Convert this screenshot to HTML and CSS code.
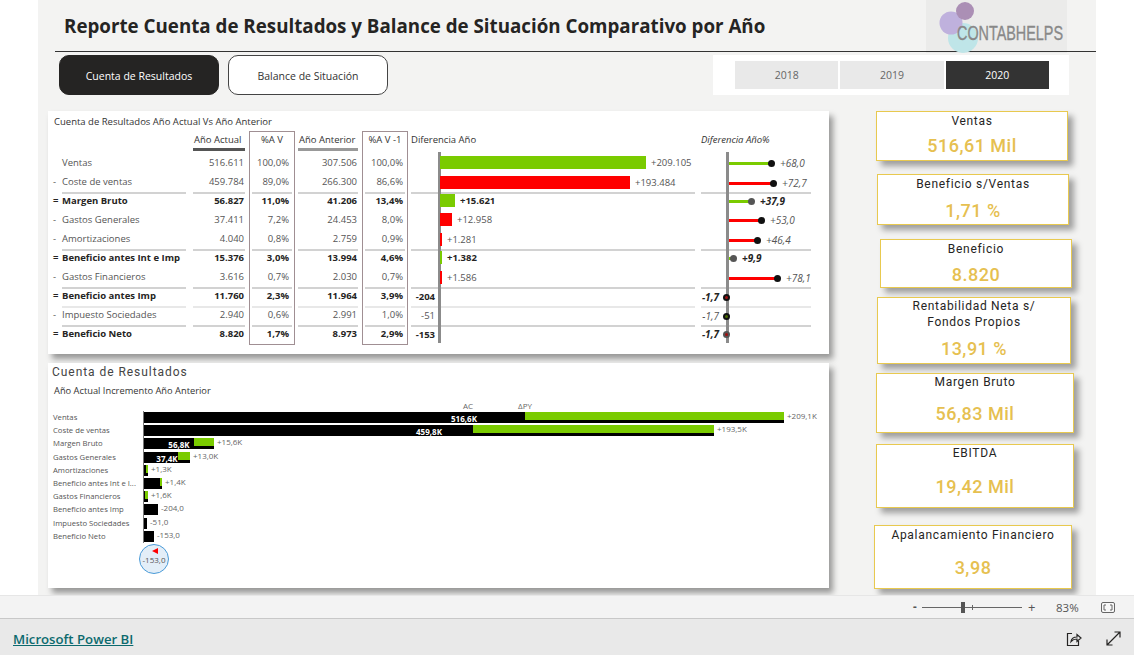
FILE: index.html
```html
<!DOCTYPE html>
<html>
<head>
<meta charset="utf-8"/>
<title>Reporte Cuenta de Resultados</title>
<link rel="stylesheet" href="styles.css">
</head>
<body>

<div class="stage">
<div class="canvas">

<!-- cabecera -->
<div class="head">
  <h1 class="title">Reporte Cuenta de Resultados y Balance de Situación Comparativo por Año</h1>
  <svg class="logo" width="141" height="53" viewBox="0 0 141 53">
    <rect width="141" height="53" fill="#000" fill-opacity=".03"/>
    <circle cx="37" cy="38" r="15" fill="#bfe5e8"/>
    <circle cx="25" cy="23" r="11.5" fill="#bfb1dd"/>
    <circle cx="39" cy="11" r="9" fill="#ab8fb5"/>
    <text transform="translate(31 40) scale(.72 1)" class="logotxt">CONTABHELPS</text>
  </svg>
</div>

<!-- navegacion -->
<div class="nav">
  <a class="btn on">Cuenta de Resultados</a>
  <a class="btn">Balance de Situación</a>
  <div class="slicer">
    <span class="yr">2018</span>
    <span class="yr">2019</span>
    <span class="yr on">2020</span>
  </div>
</div>

<div class="report">
<div class="left">

<!-- tabla -->
<div class="card tcard">
  <div class="ttitle">Cuenta de Resultados Año Actual Vs Año Anterior</div>
  <div class="tbl">
    <i class="axis ax1"></i>
    <i class="axis ax2"></i>

    <div class="row hdr">
      <span class="pre"></span><span class="name"></span>
      <span class="c act"><b>Año Actual</b></span>
      <span class="c box top"><b>%A V</b></span>
      <span class="c ant"><b>Año Anterior</b></span>
      <span class="c box box2 top"><b>%A V -1</b></span>
      <span class="dif">Diferencia Año</span>
      <span class="dpc"><em>Diferencia Año%</em></span>
    </div>

    <div class="row">
      <span class="pre"></span><span class="name">Ventas</span>
      <span class="c act"><b>516.611</b></span>
      <span class="c box"><b>100,0%</b></span>
      <span class="c ant"><b>307.506</b></span>
      <span class="c box box2"><b>100,0%</b></span>
      <span class="dif"><i class="neg"></i><i class="bar gr" style="width:206px"></i><u>+209.105</u></span>
      <span class="dpc"><i class="neg"></i><i class="stem gr" style="width:41px"></i><i class="dot"></i><u>+68,0</u></span>
    </div>
    <div class="row line">
      <span class="pre">-</span><span class="name">Coste de ventas</span>
      <span class="c act"><b>459.784</b></span>
      <span class="c box"><b>89,0%</b></span>
      <span class="c ant"><b>266.300</b></span>
      <span class="c box box2"><b>86,6%</b></span>
      <span class="dif"><i class="neg"></i><i class="bar rd" style="width:190px"></i><u>+193.484</u></span>
      <span class="dpc"><i class="neg"></i><i class="stem rd" style="width:43px"></i><i class="dot"></i><u>+72,7</u></span>
    </div>
    <div class="row tot">
      <span class="pre">=</span><span class="name">Margen Bruto</span>
      <span class="c act"><b>56.827</b></span>
      <span class="c box"><b>11,0%</b></span>
      <span class="c ant"><b>41.206</b></span>
      <span class="c box box2"><b>13,4%</b></span>
      <span class="dif"><i class="neg"></i><i class="bar gr" style="width:15px"></i><u>+15.621</u></span>
      <span class="dpc"><i class="neg"></i><i class="stem gr" style="width:21px"></i><i class="dot"></i><u>+37,9</u></span>
    </div>
    <div class="row">
      <span class="pre">-</span><span class="name">Gastos Generales</span>
      <span class="c act"><b>37.411</b></span>
      <span class="c box"><b>7,2%</b></span>
      <span class="c ant"><b>24.453</b></span>
      <span class="c box box2"><b>8,0%</b></span>
      <span class="dif"><i class="neg"></i><i class="bar rd" style="width:12px"></i><u>+12.958</u></span>
      <span class="dpc"><i class="neg"></i><i class="stem rd" style="width:31px"></i><i class="dot"></i><u>+53,0</u></span>
    </div>
    <div class="row line">
      <span class="pre">-</span><span class="name">Amortizaciones</span>
      <span class="c act"><b>4.040</b></span>
      <span class="c box"><b>0,8%</b></span>
      <span class="c ant"><b>2.759</b></span>
      <span class="c box box2"><b>0,9%</b></span>
      <span class="dif"><i class="neg"></i><i class="bar rd" style="width:2px"></i><u>+1.281</u></span>
      <span class="dpc"><i class="neg"></i><i class="stem rd" style="width:27px"></i><i class="dot"></i><u>+46,4</u></span>
    </div>
    <div class="row tot">
      <span class="pre">=</span><span class="name">Beneficio antes Int e Imp</span>
      <span class="c act"><b>15.376</b></span>
      <span class="c box"><b>3,0%</b></span>
      <span class="c ant"><b>13.994</b></span>
      <span class="c box box2"><b>4,6%</b></span>
      <span class="dif"><i class="neg"></i><i class="bar gr" style="width:2px"></i><u>+1.382</u></span>
      <span class="dpc"><i class="neg"></i><i class="stem gr" style="width:3px"></i><i class="dot"></i><u>+9,9</u></span>
    </div>
    <div class="row line">
      <span class="pre">-</span><span class="name">Gastos Financieros</span>
      <span class="c act"><b>3.616</b></span>
      <span class="c box"><b>0,7%</b></span>
      <span class="c ant"><b>2.030</b></span>
      <span class="c box box2"><b>0,7%</b></span>
      <span class="dif"><i class="neg"></i><i class="bar rd" style="width:2px"></i><u>+1.586</u></span>
      <span class="dpc"><i class="neg"></i><i class="stem rd" style="width:47px"></i><i class="dot"></i><u>+78,1</u></span>
    </div>
    <div class="row tot line soft">
      <span class="pre">=</span><span class="name">Beneficio antes Imp</span>
      <span class="c act"><b>11.760</b></span>
      <span class="c box"><b>2,3%</b></span>
      <span class="c ant"><b>11.964</b></span>
      <span class="c box box2"><b>3,9%</b></span>
      <span class="dif"><i class="neg">-204</i></span>
      <span class="dpc"><i class="neg">-1,7</i><i class="dot zero red"></i></span>
    </div>
    <div class="row line">
      <span class="pre">-</span><span class="name">Impuesto Sociedades</span>
      <span class="c act"><b>2.940</b></span>
      <span class="c box"><b>0,6%</b></span>
      <span class="c ant"><b>2.991</b></span>
      <span class="c box box2"><b>1,0%</b></span>
      <span class="dif"><i class="neg">-51</i></span>
      <span class="dpc"><i class="neg">-1,7</i><i class="dot zero"></i></span>
    </div>
    <div class="row tot end">
      <span class="pre">=</span><span class="name">Beneficio Neto</span>
      <span class="c act"><b>8.820</b></span>
      <span class="c box"><b>1,7%</b></span>
      <span class="c ant"><b>8.973</b></span>
      <span class="c box box2"><b>2,9%</b></span>
      <span class="dif"><i class="neg">-153</i></span>
      <span class="dpc"><i class="neg">-1,7</i><i class="dot zero red"></i></span>
    </div>
  </div>
</div>

<!-- grafico -->
<div class="card ccard">
  <div class="ctitle">Cuenta de Resultados</div>
  <div class="csub">Año Actual Incremento Año Anterior</div>
  <div class="clegend"><span class="lg-ac">AC</span><span class="lg-py">ΔPY</span></div>
  <div class="crow"><span class="clab">Ventas</span><div class="ctrack">
    <i class="cbar" style="width:640px"><b>516,6K</b><s class="gr" style="width:259px"></s></i><u>+209,1K</u></div></div>
  <div class="crow"><span class="clab">Coste de ventas</span><div class="ctrack">
    <i class="cbar" style="width:570px"><b>459,8K</b><s class="gr" style="width:241px"></s></i><u>+193,5K</u></div></div>
  <div class="crow"><span class="clab">Margen Bruto</span><div class="ctrack">
    <i class="cbar" style="width:70px"><b>56,8K</b><s class="gr" style="width:20px"></s></i><u>+15,6K</u></div></div>
  <div class="crow"><span class="clab">Gastos Generales</span><div class="ctrack">
    <i class="cbar" style="width:46px"><b>37,4K</b><s class="gr" style="width:12px"></s></i><u>+13,0K</u></div></div>
  <div class="crow"><span class="clab">Amortizaciones</span><div class="ctrack">
    <i class="cbar" style="width:4px"><s class="gr" style="width:2px"></s></i><u>+1,3K</u></div></div>
  <div class="crow"><span class="clab">Beneficio antes Int e I...</span><div class="ctrack">
    <i class="cbar" style="width:18px"><s class="gr" style="width:2px"></s></i><u>+1,4K</u></div></div>
  <div class="crow"><span class="clab">Gastos Financieros</span><div class="ctrack">
    <i class="cbar" style="width:4px"><s class="gr" style="width:3px"></s></i><u>+1,6K</u></div></div>
  <div class="crow"><span class="clab">Beneficio antes Imp</span><div class="ctrack">
    <i class="cbar" style="width:14px"></i><u>-204,0</u></div></div>
  <div class="crow"><span class="clab">Impuesto Sociedades</span><div class="ctrack">
    <i class="cbar" style="width:3px"></i><u>-51,0</u></div></div>
  <div class="crow"><span class="clab">Beneficio Neto</span><div class="ctrack">
    <i class="cbar" style="width:10px"></i><u>-153,0</u></div></div>
  <div class="bubble"><i class="tri"></i>-153,0</div>
</div>

</div>

<!-- indicadores -->
<div class="kpis">
  <div class="kpi k1"><div class="kt">Ventas</div><div class="kv">516,61 Mil</div></div>
  <div class="kpi k2"><div class="kt">Beneficio s/Ventas</div><div class="kv">1,71 %</div></div>
  <div class="kpi k3"><div class="kt">Beneficio</div><div class="kv">8.820</div></div>
  <div class="kpi k4"><div class="kt">Rentabilidad Neta s/<br>Fondos Propios</div><div class="kv">13,91 %</div></div>
  <div class="kpi k5"><div class="kt">Margen Bruto</div><div class="kv">56,83 Mil</div></div>
  <div class="kpi k6"><div class="kt">EBITDA</div><div class="kv">19,42 Mil</div></div>
  <div class="kpi k7"><div class="kt">Apalancamiento Financiero</div><div class="kv">3,98</div></div>
</div>
</div>

</div>
</div>

<!-- barra de zoom -->
<div class="zoombar">
  <span class="zbtn">-</span>
  <span class="zslider"><i class="ztick"></i><i class="zthumb"></i></span>
  <span class="zbtn zplus">+</span>
  <span class="zpct">83%</span>
  <svg class="zfit" width="14" height="11" viewBox="0 0 14 11" fill="none" stroke="#666">
    <rect x=".5" y=".5" width="13" height="10" rx="1.5" fill="#f7f7f7"/>
    <path d="M5 3H3v5h2M9 3h2v5H9"/>
  </svg>
</div>

<!-- pie -->
<div class="foot">
  <a class="pbi">Microsoft Power BI</a>
  <svg class="ficon share" width="16" height="16" viewBox="0 0 16 16" fill="none" stroke="#252423" stroke-width="1.2">
    <path d="M6 2.500H1.500v12h11V10"/>
    <path d="M5 10.500c.5-3 3-4.500 6-4.500V3.500L15 7l-4 3.500V8c-2.500 0-4.500.8-6 2.500z"/>
  </svg>
  <svg class="ficon" width="15" height="15" viewBox="0 0 15 15" fill="none" stroke="#252423" stroke-width="1.2">
    <path d="M1 14L14 1M8.500 1H14v5.500M1 8.500V14h5.500"/>
  </svg>
</div>

</body>
</html>
```

FILE: styles.css
```css
*{box-sizing:border-box}
html,body{margin:0;padding:0}
body{width:1134px;height:655px;overflow:hidden;background:#fff;display:flex;flex-direction:column;
font-family:"Open Sans","Liberation Sans",sans-serif;color:#252423}
i,u,s{font-style:normal;text-decoration:none}

.stage{height:595px;padding:0 38px;overflow:hidden}
.canvas{height:595px;background:#f3f3f2}

/** cabecera **/
.head{height:52px;margin-left:17px;border-bottom:1px solid #333;display:flex;justify-content:space-between;align-items:flex-start}
.title{margin:14px 0 0 9px;font-size:18.75px;line-height:24px;font-weight:700;color:#252423;white-space:nowrap}
.logo{margin-right:29px;flex:none}
.logotxt{font-family:"Liberation Sans",sans-serif;font-size:20px;fill:#888;stroke:#888;stroke-width:.35}

/** navegacion **/
.nav{display:flex;margin-top:3px;height:40px;padding-left:21px}
.btn{width:160px;height:40px;margin-right:9px;border:1px solid #444;border-radius:10px;background:#fff;font-size:10.5px;line-height:40px;text-align:center;color:#333}
.btn.on{background:#252423;color:#fff;border-color:#252423}
.slicer{margin-left:auto;margin-right:27px;width:356px;height:40px;background:#fff;padding:6px 20px 6px 22px;display:flex;gap:2px}
.yr{flex:1;background:#e9e9e9;font-size:10.5px;line-height:28px;text-align:center;color:#666}
.yr.on{background:#333;color:#fff}

.report{display:flex;margin-top:16px}
.left{width:781px;margin-left:10px;flex:none}
.card{background:#fff;box-shadow:4px 5px 6px rgba(0,0,0,.38)}

/** tabla **/
.tcard{height:243px;padding-left:5px}
.ttitle{height:20px;font-size:9.5px;line-height:21px;padding-left:1px;color:#333}
.tbl{position:relative}
.axis{position:absolute;width:3px;background:#8b8b8b;top:21px;bottom:0;z-index:1}
.ax1{left:385px}
.ax2{left:673px}
.row{display:grid;grid-template-columns:9px 124px 59px 50px 63px 50px 287px 116px;height:19px;font-size:9.5px;line-height:20px;color:#555;white-space:nowrap}
.row b{font-weight:400}
.hdr{height:22px;color:#333;line-height:18px}
.pre{text-align:left}
.name,.dif,.dpc{height:100%}
.c{display:block}
.act{margin-left:7px}
.ant{margin-left:3px}
.c b{display:block;height:100%;text-align:right;padding-right:1px}
.box{margin-left:4px;border-left:1px solid #a08f93;border-right:1px solid #a08f93;padding:0 2px}
.box b{padding-right:3px}
.box2 b{padding-right:2px}
.top{border-top:1px solid #a08f93}
.top b{margin-top:-1px}
.end .box{border-bottom:1px solid #a08f93}
.hdr .c b{height:20px}
.hdr .act b{border-bottom:3px solid #555;text-align:left;padding-left:1px}
.hdr .ant b{border-bottom:3px solid #999;text-align:left;padding-left:1px}
.hdr .box b{text-align:center;padding-right:0}
.hdr .dif,.hdr .dpc{align-items:flex-start}

.dif{margin-left:3px;display:flex;align-items:center}
.dpc{margin-left:6px;display:flex;align-items:center;font-style:italic;font-size:10px}
.hdr .dpc{font-size:9.5px}
.neg{flex:none;width:26px;text-align:right;padding-right:2px}
.dpc .neg{width:25px;padding-right:7px;margin-right:3px;margin-top:-1px;font-style:italic}
.dif .neg{margin-right:3px}
.bar{height:13px;flex:none;position:relative;z-index:1;margin-bottom:2px}
.gr{background:#7acb00}
.rd{background:#fe0000}
.dif u{margin-left:5px}
.stem{height:3px;flex:none;position:relative;z-index:1}
.dot{width:7px;height:7px;border-radius:50%;background:#111;flex:none;margin-left:-2px;position:relative;z-index:2}
.dot.zero{margin-left:-6px}
.dot.zero::after{content:"";position:absolute;left:2px;top:2px;width:3px;height:3px;border-radius:50%;background:#4a6b00}
.dot.zero.red::after{background:#a01010}
.dpc u{margin-left:5px;margin-top:-1px;font-style:italic}

.line .name,.line .act b,.line .ant b,.line .box b{border-bottom:2px solid #d2d2d2}
.line .dif,.line .dpc{box-shadow:inset 0 -2px 0 #d2d2d2}
.soft .name,.soft .act b,.soft .ant b,.soft .box b{border-bottom-color:#e8e8e8}
.soft .dif,.soft .dpc{box-shadow:inset 0 -2px 0 #e8e8e8}
.tot{font-weight:700;color:#252423}
.tot .dot{background:#555}
.tot .dot.zero{background:#111}
.end .dot.zero{background:#555}
.row.tot b{font-weight:700}

/** grafico **/
.ccard{height:225px;margin-top:9px;padding:0 0 0 5px}
.ctitle{font-family:Roboto,"Open Sans",sans-serif;font-size:12px;line-height:16px;letter-spacing:.95px;padding-top:1px;height:17px;color:#444;margin:1px 0 0 -1px}
.csub{font-size:9.3px;line-height:12px;margin:5px 0 0 1px;color:#333}
.clegend{height:11px;margin-top:3px;margin-left:90px;padding-left:320px;display:flex;font-size:8px;line-height:12px;color:#666}
.lg-py{margin-left:45px}
.crow{display:flex;height:13.2px;align-items:stretch}
.clab{width:90px;font-size:7.7px;line-height:13px;color:#555;white-space:nowrap;flex:none}
.ctrack{flex:1;border-left:1px solid #777;display:flex;align-items:center}
.cbar{position:relative;height:11px;background:#000;display:flex;justify-content:center;flex:none;font-size:8px;line-height:13px;color:#fff}
.cbar b{position:relative;z-index:1;font-weight:700;white-space:nowrap}
.cbar s{position:absolute;right:0;top:0;height:8px}
.ctrack u{margin-left:3px;font-size:8px;line-height:9px;color:#666;align-self:flex-start}
.bubble{position:relative;width:30px;height:30px;margin:1px 0 0 86px;border-radius:50%;background:#e3eef8;border:1px solid #4a9bd8;font-size:8px;line-height:30px;text-align:center;color:#555}
.tri{position:absolute;left:12px;top:3px;width:0;height:0;border-style:solid;border-width:3px 6px 3px 0;border-color:transparent #f00 transparent transparent}

/** indicadores **/
.kpis{margin-left:45px;flex:none}
.kpi{background:#fff;border:1px solid #e8c94f;box-shadow:5px 5px 6px rgba(0,0,0,.35);text-align:center}
.kt{font-family:Roboto,"Open Sans",sans-serif;font-size:12px;line-height:16px;letter-spacing:.7px;color:#252423;padding-top:1px;height:17px}
.kv{font-family:Roboto,"Open Sans",sans-serif;font-weight:500;font-size:18px;line-height:24px;letter-spacing:.5px;color:#e6c050}
.k1{width:192px;height:50px;margin-left:2px}
.k1 .kv{margin-top:5px}
.k2{width:192px;height:51px;margin-left:3px;margin-top:13px}
.k2 .kv{margin-top:7px}
.k3{width:192px;height:49px;margin-left:6px;margin-top:14px}
.k3 .kv{margin-top:6px}
.k4{width:194px;height:67px;margin-left:3px;margin-top:9px}
.k4 .kt{height:33px;padding-top:0}
.k4 .kv{margin-top:6px}
.k5{width:198px;height:60px;margin-left:2px;margin-top:9px}
.k5 .kt{padding-top:0;height:16px}
.k5 .kv{margin-top:12px}
.k6{width:198px;height:64px;margin-left:2px;margin-top:11px}
.k6 .kt{padding-top:0;height:16px}
.k6 .kv{margin-top:14px}
.k7{width:198px;height:64px;margin-top:17px}
.k7 .kv{margin-top:13px}

/** barra de zoom **/
.zoombar{height:23px;background:#f3f3f3;border-top:1px solid #e6e6e6;display:flex;align-items:center;padding-left:913px;font-size:11.5px;color:#555}
.zbtn{width:9px;font-weight:700;line-height:20px;text-align:left}
.zslider{position:relative;width:100px;height:1px;background:#666}
.ztick{position:absolute;left:50px;top:-2px;width:1px;height:5px;background:#666}
.zthumb{position:absolute;left:39px;top:-5px;width:4px;height:11px;background:#555}
.zplus{margin-left:6px;font-weight:400;font-size:13px}
.zpct{margin-left:19px;width:24px}
.zfit{margin-left:21px}

/** pie **/
.foot{flex:1;background:#e9e9e9;border-top:1px solid #c8c8c8;display:flex;align-items:center;padding:3px 0 0 13px}
.pbi{font-size:13.2px;font-weight:600;color:#0c6a6e;text-decoration:underline}
.ficon{flex:none;margin-left:24px}
.share{margin-left:auto}
.ficon:last-child{margin-right:13px}
```
